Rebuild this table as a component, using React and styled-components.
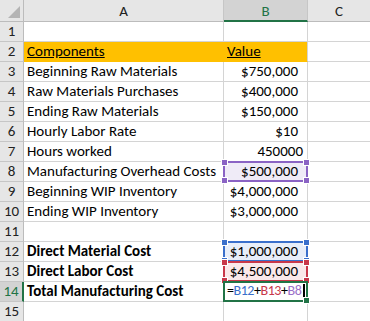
import React from 'react';
import styled, { createGlobalStyle } from 'styled-components';

const rows = [
  { n: 1, a: '', b: '' },
  { n: 2, a: 'Components', b: 'Value', head: true },
  { n: 3, a: 'Beginning Raw Materials', b: '$750,000', pad: 9 },
  { n: 4, a: 'Raw Materials Purchases', b: '$400,000', pad: 9 },
  { n: 5, a: 'Ending Raw Materials', b: '$150,000', pad: 9 },
  { n: 6, a: 'Hourly Labor Rate', b: '$10', pad: 9 },
  { n: 7, a: 'Hours worked', b: '450000', pad: 4 },
  { n: 8, a: 'Manufacturing Overhead Costs', b: '$500,000', pad: 9, range: 'purple' },
  { n: 9, a: 'Beginning WIP Inventory', b: '$4,000,000', pad: 9 },
  { n: 10, a: 'Ending WIP Inventory', b: '$3,000,000', pad: 9 },
  { n: 11, a: '', b: '' },
  { n: 12, a: 'Direct Material Cost', b: '$1,000,000', pad: 9, bold: true, range: 'blue' },
  { n: 13, a: 'Direct Labor Cost', b: '$4,500,000', pad: 9, bold: true, range: 'red' },
  { n: 14, a: 'Total Manufacturing Cost', formula: true, bold: true, range: 'green', active: true },
  { n: 15, a: '', b: '' },
];

const ranges = {
  purple: { line: '#8a63c4', fill: '#efebf7' },
  blue: { line: '#3a6fcb', fill: '#e8eef9' },
  red: { line: '#c8384a', fill: '#fae9ea' },
  green: { line: '#217346', fill: '#ffffff' },
};

function App() {
  return (
    <>
      <GlobalStyle />
      <Sheet>
        <Corner>
          <CornerMark />
        </Corner>
        <ColHead>A</ColHead>
        <ColHead $on>B</ColHead>
        <ColHead $last>C</ColHead>
        {rows.map((r) => (
          <React.Fragment key={r.n}>
            <RowHead $on={r.active}>{r.n}</RowHead>
            <Cell $fill={r.head ? '#ffc000' : null} $bold={r.bold} $noRight={r.head}>
              {r.head ? <u>{r.a}</u> : r.a}
            </Cell>
            <Cell
              $fill={r.head ? '#ffc000' : r.range ? ranges[r.range].fill : null}
              $right={!r.head && !r.formula}
              $pad={r.pad}
            >
              {r.head ? <u>{r.b}</u> : r.formula ? <Formula /> : r.b}
              {r.range && <RangeBox range={r.range} active={r.active} />}
            </Cell>
            <Cell $last />
          </React.Fragment>
        ))}
      </Sheet>
    </>
  );
}

function Formula() {
  return (
    <FormulaText>
      =<Ref $c="#3a6fcb">B12</Ref>+<Ref $c="#c8384a">B13</Ref>+<Ref $c="#9b70c9">B8</Ref>
      <Caret />
    </FormulaText>
  );
}

function RangeBox({ range, active }) {
  const color = ranges[range].line;
  return (
    <Box $c={color}>
      {!active && <Handle $c={color} $v="top" $h="left" />}
      {!active && <Handle $c={color} $v="top" $h="right" />}
      {!active && <Handle $c={color} $v="bottom" $h="left" />}
      <Handle $c={color} $v="bottom" $h="right" />
    </Box>
  );
}

const GlobalStyle = createGlobalStyle`
  body {
    margin: 0;
    background: #ffffff;
    font-family: Carlito, Lato, 'Liberation Sans', sans-serif;
    overflow: hidden;
  }
`;

const Sheet = styled.div`
  display: grid;
  grid-template-columns: 24px 200px 84px 1fr;
  grid-template-rows: 22px;
  grid-auto-rows: 20px;
  width: 370px;
  font-size: 15px;
  color: #000000;
`;

const Corner = styled.div`
  position: relative;
  background: #e6e6e6;
  border-right: 1px solid #bcbcbc;
  border-bottom: 1px solid #bcbcbc;
  box-sizing: border-box;
`;

const CornerMark = styled.div`
  position: absolute;
  right: 3px;
  bottom: 3px;
  width: 0;
  height: 0;
  border-left: 12px solid transparent;
  border-bottom: 12px solid #b4b4b4;
`;

const ColHead = styled.div`
  display: flex;
  align-items: center;
  justify-content: center;
  box-sizing: border-box;
  background: ${(p) => (p.$on ? '#d3d3d3' : '#e6e6e6')};
  color: ${(p) => (p.$on ? '#217346' : '#222222')};
  border-right: ${(p) => (p.$last ? 'none' : '1px solid #c6c6c6')};
  border-bottom: ${(p) => (p.$on ? '2px solid #217346' : '1px solid #bcbcbc')};
  padding-top: ${(p) => (p.$on ? '1px' : '0')};
  font-size: 15px;
`;

const RowHead = styled.div`
  display: flex;
  align-items: flex-end;
  justify-content: center;
  box-sizing: border-box;
  padding-bottom: 1px;
  background: ${(p) => (p.$on ? '#d3d3d3' : '#e6e6e6')};
  color: ${(p) => (p.$on ? '#217346' : '#222222')};
  border-right: ${(p) => (p.$on ? '2px solid #217346' : '1px solid #bcbcbc')};
  border-bottom: 1px solid #c6c6c6;
  font-size: 15px;
  line-height: 18px;
`;

const Cell = styled.div`
  position: relative;
  display: flex;
  align-items: flex-end;
  justify-content: ${(p) => (p.$right ? 'flex-end' : 'flex-start')};
  box-sizing: border-box;
  padding: 0 ${(p) => (p.$right ? `${p.$pad || 4}px` : '0')} 1px ${(p) => (p.$right ? '0' : '3px')};
  background: ${(p) => p.$fill || '#ffffff'};
  border-right: ${(p) => (p.$last ? 'none' : p.$noRight ? '1px solid #ffc000' : '1px solid #d4d4d4')};
  border-bottom: 1px solid ${(p) => (p.$fill === '#ffc000' ? '#ffc000' : '#d4d4d4')};
  font-weight: ${(p) => (p.$bold ? 700 : 400)};
  line-height: 18px;
  white-space: nowrap;
`;

const FormulaText = styled.span`
  display: flex;
  align-items: flex-end;
  font-weight: 400;
  font-size: 14px;
  letter-spacing: -0.45px;
`;

const Ref = styled.span`
  color: ${(p) => p.$c};
`;

const Caret = styled.span`
  display: inline-block;
  width: 2px;
  height: 16px;
  margin-left: 2px;
  margin-bottom: 1px;
  background: #000000;
`;

const Box = styled.div`
  position: absolute;
  left: -1px;
  top: -1px;
  right: -1px;
  bottom: -1px;
  border: 2px solid ${(p) => p.$c};
  pointer-events: none;
  z-index: 1;
`;

const Handle = styled.div`
  position: absolute;
  width: 5px;
  height: 5px;
  background: ${(p) => p.$c};
  border: 1px solid #ffffff;
  ${(p) => (p.$v === 'top' ? 'top: -4px;' : 'bottom: -4px;')}
  ${(p) => (p.$h === 'left' ? 'left: -4px;' : 'right: -4px;')}
`;

export default App;
